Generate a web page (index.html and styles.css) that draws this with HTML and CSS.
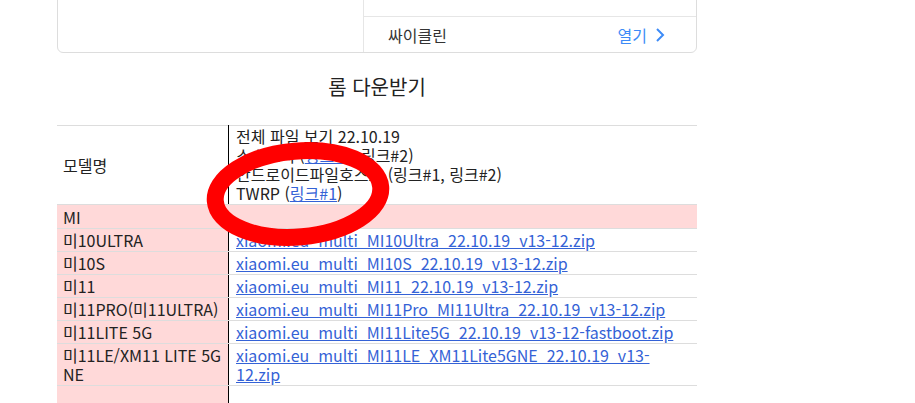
FILE: index.html
```html
<!DOCTYPE html>
<html lang="ko">
<head>
  <meta charset="UTF-8">
  <title>롬 다운받기</title>
  <link rel="stylesheet" href="styles.css">
</head>
<body>

  <div class="page">
    <div class="app-card">
      <div class="app-side"></div>
      <div class="app-list">
        <div class="app-row">
          <span class="app-name">클린 마스터 - 휴대폰 정리 앱</span>
        </div>
        <div class="app-row">
          <span class="app-name">싸이클린</span>
          <a class="app-open" href="#">열기
            <svg width="11" height="16" viewBox="0 0 11 16"><path d="M2 2l6 6-6 6" fill="none" stroke="#3d8bf7" stroke-width="2"/></svg>
          </a>
        </div>
      </div>
    </div>

    <h3 class="title">롬 다운받기</h3>

    <div class="rom-box">
      <table class="rom-table">
        <tr class="head">
          <td class="model">모델명</td>
          <td class="files">
            전체 파일 보기 22.10.19<br>
            소스포지 (<a href="#">링크#1</a>, 링크#2)<br>
            안드로이드파일호스트 (링크#1, 링크#2)<br>
            TWRP (<a href="#">링크#1</a>)
          </td>
        </tr>
        <tr class="group">
          <td colspan="2">MI</td>
        </tr>
        <tr>
          <td class="model">미10ULTRA</td>
          <td class="files"><a href="#">xiaomi.eu_multi_MI10Ultra_22.10.19_v13-12.zip</a></td>
        </tr>
        <tr>
          <td class="model">미10S</td>
          <td class="files"><a href="#">xiaomi.eu_multi_MI10S_22.10.19_v13-12.zip</a></td>
        </tr>
        <tr>
          <td class="model">미11</td>
          <td class="files"><a href="#">xiaomi.eu_multi_MI11_22.10.19_v13-12.zip</a></td>
        </tr>
        <tr>
          <td class="model">미11PRO(미11ULTRA)</td>
          <td class="files"><a href="#">xiaomi.eu_multi_MI11Pro_MI11Ultra_22.10.19_v13-12.zip</a></td>
        </tr>
        <tr>
          <td class="model">미11LITE 5G</td>
          <td class="files"><a href="#">xiaomi.eu_multi_MI11Lite5G_22.10.19_v13-12-fastboot.zip</a></td>
        </tr>
        <tr>
          <td class="model">미11LE/XM11 LITE 5G NE</td>
          <td class="files"><a href="#">xiaomi.eu_multi_MI11LE_XM11Lite5GNE_22.10.19_v13-12.zip</a></td>
        </tr>
        <tr class="empty">
          <td class="model"></td>
          <td class="files"></td>
        </tr>
      </table>

      <!-- red marker drawn over the table -->
      <svg class="marker" width="200" height="120" viewBox="0 0 200 120">
        <ellipse cx="100" cy="57" rx="83" ry="43" transform="rotate(-5 100 57)" fill="none" stroke="#ff0000" stroke-width="17"/>
      </svg>
    </div>
  </div>

</body>
</html>
```

FILE: styles.css
```css
body {
  margin: 0;
  background: #fff;
  color: #222;
  font-family: "Noto Sans CJK KR", "Noto Sans", sans-serif;
  font-size: 16px;
}
.page {
  width: 640px;
  margin-left: 57px;
}
.app-card {
  display: flex;
  margin-top: -27px;
  border: 1px solid #ddd;
  border-radius: 6px;
}
.app-side {
  width: 305px;
  border-right: 1px solid #e6e6e6;
}
.app-list {
  flex: 1;
}
.app-row {
  display: flex;
  align-items: center;
  justify-content: space-between;
  height: 35px;
  padding: 0 30px 0 24px;
  color: #333;
}
.app-row + .app-row {
  border-top: 1px solid #e6e6e6;
}
.app-row:first-child {
  height: 42px;
  box-sizing: border-box;
  align-items: flex-end;
  padding-bottom: 13px;
}
.app-open {
  display: flex;
  align-items: center;
  gap: 8px;
  color: #3d8bf7;
  text-decoration: none;
}
.title {
  margin: 20px 0 24px;
  text-align: center;
  font-size: 20px;
  font-weight: normal;
  line-height: 28px;
  color: #222;
}
.rom-box {
  position: relative;
}
.rom-table {
  width: 100%;
  border-collapse: collapse;
  border-top: 1px solid #ddd;
}
.rom-table td {
  padding: 2px 6px 1px;
  line-height: 19px;
  border-bottom: 1px solid #ddd;
  vertical-align: middle;
}
.rom-table .model {
  width: 159px;
  background: #ffd9d9;
  border-right: 1px solid #000;
}
.rom-table .files {
  padding-left: 7px;
}
.rom-table .head td {
  padding-top: 1px;
}
.rom-table .head .model {
  background: #fff;
}
.rom-table .group td {
  padding-top: 3px;
  background: #ffd9d9;
}
.rom-table .empty td {
  height: 30px;
  border-bottom: none;
}
.rom-table a {
  color: #3462d6;
}
.marker {
  position: absolute;
  left: 141px;
  top: 12px;
}
```
